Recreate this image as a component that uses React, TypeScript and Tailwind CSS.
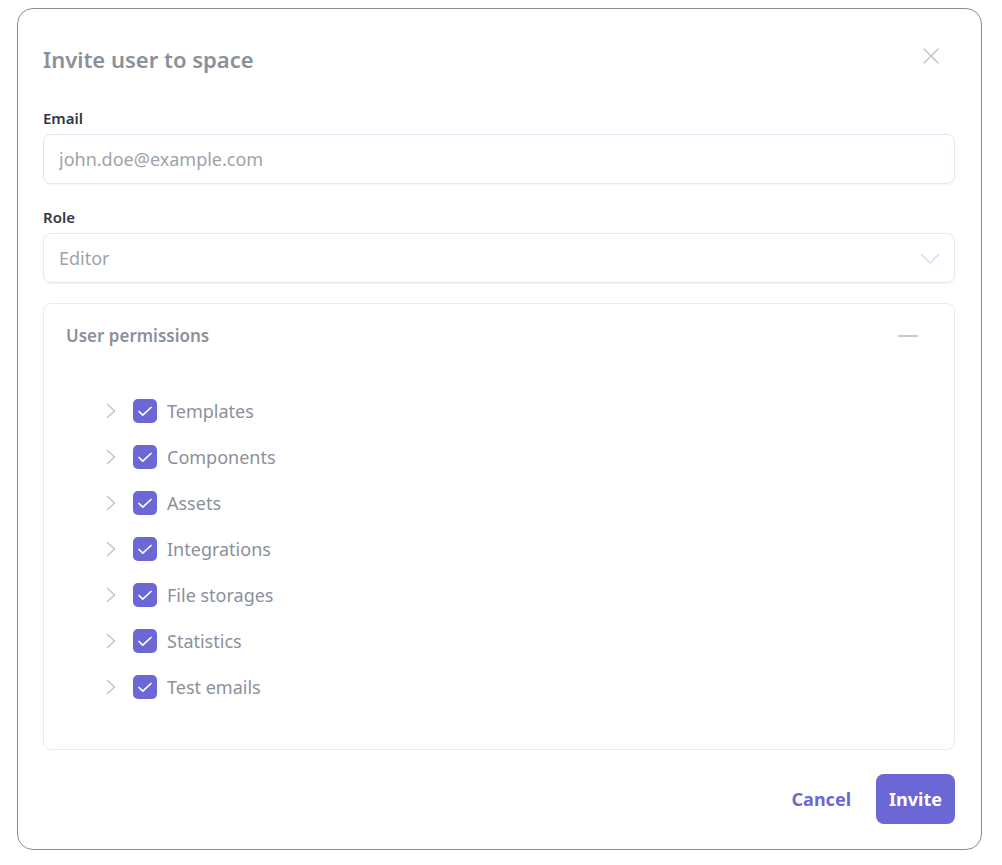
import React, { useState } from "react";

const permissions = [
  "Templates",
  "Components",
  "Assets",
  "Integrations",
  "File storages",
  "Statistics",
  "Test emails",
];

function CheckIcon() {
  return (
    <svg viewBox="0 0 24 24" className="w-6 h-6" fill="none">
      <path
        d="M6 12.5l3.8 3.6L18 8.5"
        stroke="white"
        strokeWidth="1.7"
        strokeLinecap="round"
        strokeLinejoin="round"
      />
    </svg>
  );
}

function PermissionRow({ label }: { label: string }) {
  const [checked, setChecked] = useState(true);
  return (
    <div className="flex items-center h-[46px]">
      <svg viewBox="0 0 24 24" className="w-6 h-6 mr-[10px] text-[#c3c7ce]" fill="none">
        <path d="M8.5 5.5l7 6.5-7 6.5" stroke="currentColor" strokeWidth="1.6" strokeLinecap="round" strokeLinejoin="round" />
      </svg>
      <button
        type="button"
        onClick={() => setChecked(!checked)}
        className={`w-6 h-6 rounded-[5px] flex items-center justify-center ${
          checked ? "bg-[#6b67d4]" : "border border-gray-300 bg-white"
        }`}
      >
        {checked && <CheckIcon />}
      </button>
      <span className="ml-[10px] text-[18px] text-[#8b909b]">{label}</span>
    </div>
  );
}

export default function App() {
  const [open, setOpen] = useState(true);
  return (
    <div className="min-h-screen bg-white pt-2 pl-[17px] pr-[20px] font-['Noto_Sans','Open_Sans',sans-serif]">
      <div className="w-[965px] h-[842px] rounded-[16px] border border-[#8c8c8c] bg-white pl-[25px] pr-[26px] pt-[30px] flex flex-col">
        <div className="flex items-center justify-between">
          <h2 className="text-[22px] font-semibold text-[#8b909b] leading-[40px]">Invite user to space</h2>
          <button type="button" className="mr-[12px] mt-[-6px] text-[#c3c7ce]">
            <svg viewBox="0 0 24 24" className="w-6 h-6" fill="none">
              <path d="M5 5l14 14M19 5L5 19" stroke="currentColor" strokeWidth="1.5" strokeLinecap="round" />
            </svg>
          </button>
        </div>

        <label className="mt-[29px] text-[15px] font-semibold text-[#333640] leading-5">Email</label>
        <input
          type="email"
          placeholder="john.doe@example.com"
          className="mt-[6px] h-[50px] w-full rounded-[8px] border border-[#dfe8f4] px-[15px] text-[18px] shadow-[0_1px_2px_rgba(0,0,0,0.05)] placeholder:text-[#9ea3ab] outline-none"
        />

        <label className="mt-[23px] text-[15px] font-semibold text-[#333640] leading-5">Role</label>
        <div className="mt-[6px] h-[50px] w-full rounded-[8px] border border-[#e3eaf3] px-[15px] flex items-center justify-between shadow-[0_1px_2px_rgba(0,0,0,0.05)]">
          <span className="text-[18px] text-[#9ea3ab]">Editor</span>
          <svg viewBox="0 0 24 24" className="w-6 h-6 mr-[-3px] text-[#cfe0f5]" fill="none">
            <path d="M3.5 8.5l8.5 8.5 8.5-8.5" stroke="currentColor" strokeWidth="1.6" strokeLinecap="round" strokeLinejoin="round" />
          </svg>
        </div>

        <div className="mt-[20px] h-[447px] w-full rounded-[8px] border border-[#ececec]">
          <div className="flex items-center justify-between pl-[22px] pr-[36px] h-[64px]">
            <span className="text-[17px] font-semibold text-[#8b909b]">User permissions</span>
            <button type="button" onClick={() => setOpen(!open)} className="w-[20px] h-[2px] bg-[#c3c7ce] rounded" />
          </div>
          {open && (
            <div className="pl-[55px] pt-[20px] flex flex-col">
              {permissions.map((p) => (
                <PermissionRow key={p} label={p} />
              ))}
            </div>
          )}
        </div>

        <div className="mt-[24px] flex items-center justify-end gap-[25px]">
          <button type="button" className="text-[18px] font-bold text-[#6b67d4]">
            Cancel
          </button>
          <button type="button" className="h-[50px] w-[79px] rounded-[8px] bg-[#6b67d4] text-[18px] font-bold text-white">
            Invite
          </button>
        </div>
      </div>
    </div>
  );
}
